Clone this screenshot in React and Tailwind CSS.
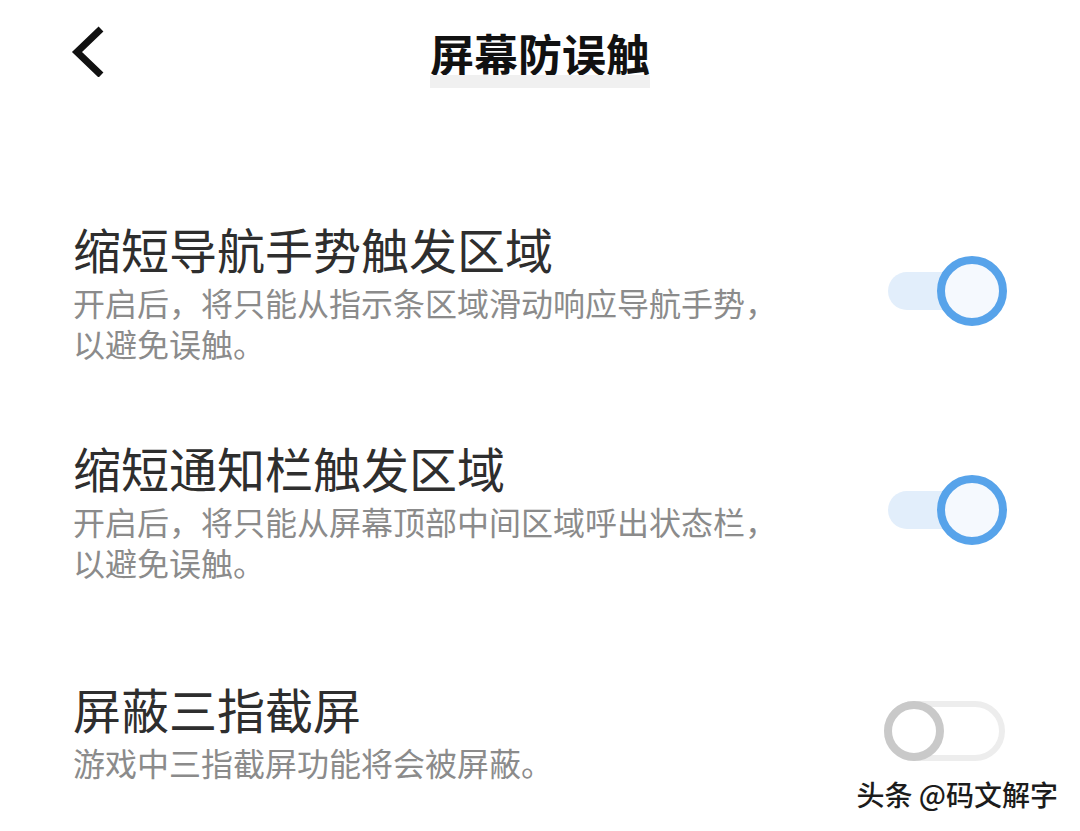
import React from 'react';

const rows = [
  {
    title: '缩短导航手势触发区域',
    desc: '开启后，将只能从指示条区域滑动响应导航手势，\n以避免误触。',
    on: true,
    gap: 'mt-[130px]',
  },
  {
    title: '缩短通知栏触发区域',
    desc: '开启后，将只能从屏幕顶部中间区域呼出状态栏，\n以避免误触。',
    on: true,
    gap: 'mt-[73px]',
  },
  {
    title: '屏蔽三指截屏',
    desc: '游戏中三指截屏功能将会被屏蔽。',
    on: false,
    gap: 'mt-[95px]',
  },
];

function Toggle({ on }) {
  if (on) {
    return (
      <div className="relative w-[124px] h-[70px] shrink-0">
        <div className="absolute left-[5px] top-[16px] w-[100px] h-[38px] rounded-full bg-[#e2eefb]" />
        <div className="absolute right-0 top-0 w-[70px] h-[70px] rounded-full border-[8px] border-[#57a3ea] bg-[#f5f9fe]" />
      </div>
    );
  }
  return (
    <div className="relative w-[124px] h-[70px] shrink-0">
      <div className="absolute left-[1px] top-[5px] w-[121px] h-[60px] rounded-full border-[6px] border-[#ededed] bg-white" />
      <div className="absolute left-[1px] top-[5px] w-[60px] h-[60px] rounded-full border-[8px] border-[#c9c9c9] bg-white" />
    </div>
  );
}

export default function App() {
  return (
    <div
      className="relative w-[1080px] h-[831px] overflow-hidden bg-white"
      style={{ fontFamily: '"Noto Sans CJK SC", "Noto Sans", sans-serif' }}
    >
      {/* header */}
      <div className="grid grid-cols-[1fr_auto_1fr] items-start pt-[25px]">
        <div className="pl-[70px]">
          <svg width="36" height="52" viewBox="0 0 36 52" fill="none">
            <polyline points="31,4 7,27 31,50" stroke="#111" strokeWidth="7" strokeLinejoin="miter" />
          </svg>
        </div>
        <div className="flex flex-col mt-[6px]">
          <div className="text-[44px] leading-[44px] font-bold text-[#111] whitespace-nowrap">屏幕防误触</div>
          <div className="h-[13px] bg-[#f0f0f0]" />
        </div>
        <div />
      </div>

      {rows.map((r) => (
        <div key={r.title} className={`${r.gap} flex items-center justify-between pl-[73px] pr-[73px]`}>
          <div className="flex flex-col">
            <div className="text-[48px] leading-[60px] text-[#2e2e2e] whitespace-nowrap">{r.title}</div>
            <div className="mt-[4px] text-[32px] leading-[41px] text-[#8b8b8b] whitespace-pre">{r.desc}</div>
          </div>
          <Toggle on={r.on} />
        </div>
      ))}

      <div className="absolute right-[22px] top-[776px] text-[28px] leading-[36px] font-medium text-[#1c1c1c] whitespace-nowrap [text-shadow:1px_1px_0_#fff,-1px_-1px_0_#fff,1px_-1px_0_#fff,-1px_1px_0_#fff]">
        头条 @码文解字
      </div>
    </div>
  );
}
